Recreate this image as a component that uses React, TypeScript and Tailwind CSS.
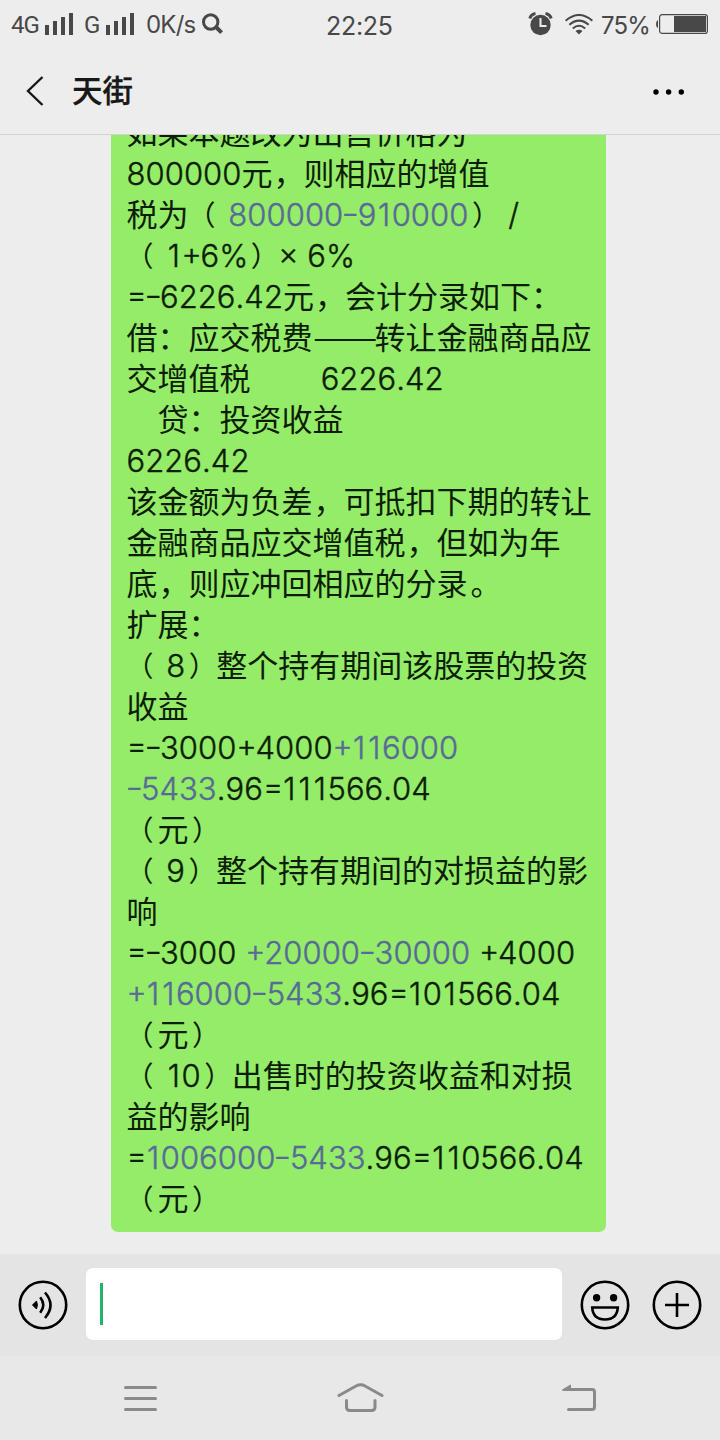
import type { ReactNode } from "react";

type Segment = { text: string; kind?: "link" | "latin" };

const latin = (text: string): Segment => ({ text, kind: "latin" });
const link = (text: string): Segment => ({ text, kind: "link" });
const han = (text: string): Segment => ({ text });

const message: Segment[][] = [
  [han("如果本题改为出售价格为")],
  [latin("800000"), han("元，则相应的增值")],
  [han("税为（"), latin(" "), link("800000-910000"), han("）"), latin(" /")],
  [han("（"), latin(" 1+6%"), han("）"), latin("× 6%")],
  [latin("=-6226.42"), han("元，会计分录如下：")],
  [han("借：应交税费——转让金融商品应")],
  [han("交增值税"), latin("        6226.42")],
  [han("　贷：投资收益")],
  [latin("6226.42")],
  [han("该金额为负差，可抵扣下期的转让")],
  [han("金融商品应交增值税，但如为年")],
  [han("底，则应冲回相应的分录。")],
  [han("扩展：")],
  [han("（"), latin(" 8"), han("）整个持有期间该股票的投资")],
  [han("收益")],
  [latin("=-3000+4000"), link("+116000")],
  [link("-5433"), latin(".96=111566.04")],
  [han("（元）")],
  [han("（"), latin(" 9"), han("）整个持有期间的对损益的影")],
  [han("响")],
  [latin("=-3000 "), link("+20000-30000"), latin(" +4000")],
  [link("+116000-5433"), latin(".96=101566.04")],
  [han("（元）")],
  [han("（"), latin(" 10"), han("）出售时的投资收益和对损")],
  [han("益的影响")],
  [latin("="), link("1006000-5433"), latin(".96=110566.04")],
  [han("（元）")],
];

function hanText(text: string): ReactNode[] {
  return text.split(/([（）。，]|——)/).map((part, i) => {
    switch (part) {
      case "（":
        return <span key={i} className="inline-block w-[31px] -indent-[1px] text-[28px]">（</span>;
      case "）":
        return <span key={i} className="inline-block w-[31px] indent-[3.5px] text-[28px]">）</span>;
      case "。":
        return <span key={i} className="inline-block w-[31px] indent-[3px]">。</span>;
      case "，":
        return <span key={i} className="inline-block w-[31px] indent-[1px]">，</span>;
      case "——":
        return <span key={i} className="inline-block w-[62px] origin-left scale-x-[1.24]">——</span>;
      default:
        return part;
    }
  });
}

function latinText(text: string): ReactNode[] {
  return text.split(/([-+=1%])/).map((part, i) => {
    if (part === "-") return <span key={i} className="inline-block w-[14.5px] scale-x-[1.25] text-center">-</span>;
    if (part === "1") return <span key={i} className="inline-block w-[15.2px] text-center">1</span>;
    if (part === "%") return <span key={i} className="-mr-[1px]">%</span>;
    if (part === "+" || part === "=") return <span key={i} className="inline-block w-[19px] text-center">{part}</span>;
    return part;
  });
}

function Run({ segment }: { segment: Segment }) {
  if (segment.kind === "link") {
    return <span className="font-[Inter] font-light tracking-[0.05px] text-[#576b95] [-webkit-text-stroke:0.4px_#576b95] [font-feature-settings:'case'] [font-kerning:none]">{latinText(segment.text)}</span>;
  }
  if (segment.kind === "latin") {
    return <span className="font-[Inter] font-light tracking-[0.05px] [-webkit-text-stroke:0.4px_#0c1f06] [font-feature-settings:'case'] [font-kerning:none]">{latinText(segment.text)}</span>;
  }
  return <>{hanText(segment.text)}</>;
}

function Signal() {
  return (
    <svg width="28" height="22" viewBox="0 0 28 22" fill="#484848">
      <path d="M0 12h4v10H0zM8 8h4v14H8zM16 4h4v18h-4zM24 0h4v22h-4z" />
    </svg>
  );
}

function StatusBar() {
  return (
    <div className="flex h-[48px] items-center pr-3 pl-[11px] font-[Roboto] text-[24px] leading-[28px] text-[#484848]">
      <div className="flex w-[315px] items-center">
        <span className="w-[34px] pt-[1px] tracking-[-1px]">4G</span>
        <Signal />
        <span className="ml-[11px] w-[22px] pt-[1px]">G</span>
        <Signal />
        <span className="ml-[12px] w-[56px] whitespace-nowrap pt-[2px] font-[Inter] tracking-[-0.8px]">0K/s</span>
        <svg width="21" height="22" viewBox="0 0 21 22" fill="none" stroke="#484848">
          <circle cx="8.7" cy="9" r="7.2" strokeWidth="3" />
          <path d="M14 14l5.6 5.6" strokeWidth="4" />
        </svg>
      </div>
      <span className="w-[202px] pt-[4px] font-[Inter] text-[25px] tracking-[-0.3px]">22:25</span>
      <svg className="shrink-0" width="25" height="24" viewBox="0 0 25 24">
        <circle cx="12.5" cy="13" r="10.2" fill="#484848" />
        <path d="M1.8 6.5Q3 2.2 7.5 1.5M23.2 6.5Q22 2.2 17.5 1.5" fill="none" stroke="#484848" strokeWidth="3" />
        <path d="M12.5 6v8h6" fill="none" stroke="#ededed" strokeWidth="2" />
      </svg>
      <svg className="ml-[12px] shrink-0" width="28" height="21" viewBox="0 0 28 21" fill="none" stroke="#484848" strokeWidth="2">
        <path d="M0.6 6.8Q14-4.8 27.4 6.8M4.3 10.8Q14 2.4 23.7 10.8M7.8 14.5Q14 9 20.2 14.5" />
        <path d="M10.5 17Q14 14.5 17.5 17L14 20.5z" fill="#484848" stroke="none" />
      </svg>
      <span className="ml-[8px] w-[55px] pt-[3px] font-[Inter] tracking-[-0.9px]">75%</span>
      <svg className="shrink-0" width="52" height="20" viewBox="0 0 52 20">
        <path d="M2 6v8Q0 13 0 10t2-4z" fill="#484848" />
        <rect x="3.6" y="0.6" width="47.8" height="18.8" rx="2.5" fill="none" stroke="#484848" strokeWidth="1.2" />
        <path d="M18 2h32v16H18z" fill="#484848" />
      </svg>
    </div>
  );
}

function Header() {
  return (
    <header className="flex h-[87px] items-center border-b border-[#d2d2d2] pl-[26px] pr-[35px]">
      <svg width="18" height="30" viewBox="0 0 18 30" fill="none" stroke="#181818" strokeWidth="2.4">
        <path d="M16.5 1L2 15l14.5 14" />
      </svg>
      <h1 className="ml-[28px] flex-1 pb-[5px] text-[30.5px] leading-[40px] font-medium text-[#181818] [-webkit-text-stroke:0.3px_#181818]">天街</h1>
      <svg className="mt-[2px]" width="32" height="6" viewBox="0 0 32 6">
        <circle cx="3" cy="3" r="2.7" />
        <circle cx="15.6" cy="3" r="2.7" />
        <circle cx="28.3" cy="3" r="2.7" />
      </svg>
    </header>
  );
}

function InputBar() {
  return (
    <div className="flex h-[102px] items-center bg-[#e4e4e4] pl-[18px]">
      <svg width="50" height="50" viewBox="0 0 50 50" fill="none" stroke="#000" strokeWidth="2.6">
        <circle cx="25" cy="25" r="23.2" />
        <path d="M14.5 25l4-4q1.8 4 0 8z" fill="#000" stroke="#000" strokeWidth="1" />
        <path d="M22.2 17.2q6.2 7.8 0 15.6M27 12.5q11 12.5 0 25.5" />
      </svg>
      <div className="mb-[2px] ml-[18px] flex h-[72px] w-[476px] items-center rounded-[7px] bg-white pl-[14px]">
        <div className="h-[42px] w-[3px] bg-[#22b26c]" />
      </div>
      <svg className="ml-[18px]" width="50" height="50" viewBox="0 0 50 50" fill="none" stroke="#000" strokeWidth="2.6">
        <circle cx="25" cy="25" r="23.2" />
        <circle cx="16.6" cy="17.8" r="3.7" fill="#000" stroke="none" />
        <circle cx="33.6" cy="17.8" r="3.7" fill="#000" stroke="none" />
        <path d="M12.2 27.5h25.6q-.8 12-12.8 12t-12.8-12z" />
      </svg>
      <svg className="ml-[22px]" width="50" height="50" viewBox="0 0 50 50" fill="none" stroke="#000" strokeWidth="2.6">
        <circle cx="25" cy="25" r="23.2" />
        <path d="M13 25h24M25 13v24" />
      </svg>
    </div>
  );
}

function NavBar() {
  return (
    <nav className="flex h-[84px] items-center bg-[#e8e8e8] pl-[124px] text-[#8a8a8a]">
      <svg width="33" height="30" viewBox="0 0 33 30" fill="none" stroke="currentColor" strokeWidth="3" strokeLinecap="round">
        <path d="M1.5 4.5h30M1.5 15.5h30M1.5 26.5h30" />
      </svg>
      <svg className="ml-[180px]" width="48" height="30" viewBox="0 0 48 30" fill="none" stroke="currentColor" strokeWidth="3" strokeLinecap="round">
        <path d="M2 12.5L19 3q5-2.5 9 0l17 9.5M9.5 17.5v6.5q0 3.5 3.5 3.5h21.5q3.5 0 3.5-3.5v-6.5" />
      </svg>
      <svg className="ml-[176px]" width="36" height="30" viewBox="0 0 36 30" fill="none" stroke="currentColor" strokeWidth="3" strokeLinecap="round">
        <path d="M4 6.5h27q2.5 0 2.5 2.5v15q0 2.5-2.5 2.5H7.5" />
        <path d="M1.5 7L9.5 2v5z" fill="currentColor" strokeWidth="1" />
      </svg>
    </nav>
  );
}

export default function App() {
  return (
    <div className="flex h-[1440px] w-[720px] flex-col overflow-hidden bg-[#ededed] font-['Noto_Sans_CJK_SC',sans-serif]">
      <StatusBar />
      <Header />
      <main className="flex min-h-0 flex-1 flex-col justify-end overflow-hidden pb-[22px] pl-[111px]">
        <div className="w-[495px] rounded-b-[7px] bg-[#95ec69] pb-[15px] pl-[15.5px] text-[31px] leading-[41px] font-normal text-[#0c1f06]">
          {message.map((line, i) => (
            <div key={i} className="h-[41px] whitespace-pre">
              {line.map((segment, j) => (
                <Run key={j} segment={segment} />
              ))}
            </div>
          ))}
        </div>
      </main>
      <InputBar />
      <NavBar />
    </div>
  );
}
